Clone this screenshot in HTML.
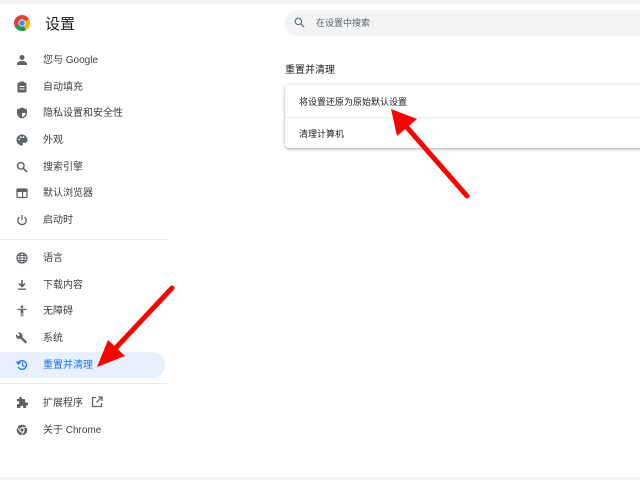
<!DOCTYPE html>
<html><head><meta charset="utf-8"><style>
body{margin:0;width:640px;height:480px;background:#fff;position:relative;overflow:hidden;font-family:"Liberation Sans","Noto Sans CJK SC",sans-serif;color:#3c4043}
.top{position:absolute;left:0;top:0;width:640px;height:4px;background:#f1f3f4}
.bot{position:absolute;left:0;top:477px;width:640px;height:3px;background:#f1f3f4}
.item{position:absolute;left:0;width:165px;height:26px;font-size:10px;line-height:26px}
.item span{position:absolute;left:43px;top:1px}
.item svg{position:absolute;left:16px;top:7px;width:12px;height:12px}
.sel{background:#e8f0fe;border-radius:0 13px 13px 0;color:#1a73e8}
.sep{position:absolute;left:0;width:167px;height:1px;background:#e8eaed}
</style></head><body>
<div class="top"></div><div class="bot"></div>
<svg style="position:absolute;left:14px;top:15px" width="16" height="16" viewBox="0 0 16 16"><circle cx="8" cy="8" r="8" fill="#db4437"/><path d="M8 8 L1.1 12 A8 8 0 0 0 12 14.9Z" fill="#0f9d58"/><path d="M8 8 L12 14.9 A8 8 0 0 0 14.9 4Z" fill="#f4b400"/><circle cx="8" cy="8" r="3.6" fill="#fff"/><circle cx="8" cy="8" r="2.8" fill="#4285f4"/></svg>
<div style="position:absolute;left:45px;top:13px;font-size:15px;color:#202124">设置</div>
<div class="item" style="top:47px"><svg viewBox="0 0 12 12"><circle cx="6" cy="3.5" r="2.5" fill="#5f6368"/><path d="M1 11v-1.5c0-1.5 3-2.5 5-2.5s5 1 5 2.5V11z" fill="#5f6368"/></svg><span>您与 Google</span></div>
<div class="item" style="top:74px"><svg viewBox="0 0 12 12"><rect x="1.5" y="1.5" width="9" height="10" rx="1" fill="#5f6368"/><rect x="4" y="0.5" width="4" height="2" fill="#5f6368"/><rect x="3.5" y="5" width="5" height="1" fill="#fff"/><rect x="3.5" y="7.5" width="5" height="1" fill="#fff"/></svg><span>自动填充</span></div>
<div class="item" style="top:100px"><svg viewBox="0 0 12 12"><path d="M6 0.5 L11 2.5 V6 C11 9 8.5 11 6 11.5 C3.5 11 1 9 1 6 V2.5Z" fill="#5f6368"/><path d="M6 2 V10 C8 9.5 9.6 8 9.6 6H6Z" fill="#fff"/></svg><span>隐私设置和安全性</span></div>
<div class="item" style="top:127px"><svg viewBox="0 0 12 12"><path d="M6 0.5a5.5 5.5 0 0 0 0 11c1 0 1.2-.8.8-1.4-.4-.6 0-1.3.8-1.3H9a2.5 2.5 0 0 0 2.5-2.5C11.5 3 9 .5 6 .5z" fill="#5f6368"/><circle cx="3.2" cy="5.5" r=".9" fill="#fff"/><circle cx="4.8" cy="3.2" r=".9" fill="#fff"/><circle cx="7.5" cy="3.2" r=".9" fill="#fff"/></svg><span>外观</span></div>
<div class="item" style="top:154px"><svg viewBox="0 0 12 12"><circle cx="4.8" cy="4.8" r="3.3" fill="none" stroke="#5f6368" stroke-width="1.4"/><path d="M7.3 7.3L11 11" stroke="#5f6368" stroke-width="1.6"/></svg><span>搜索引擎</span></div>
<div class="item" style="top:180px"><svg viewBox="0 0 12 12"><rect x="1" y="2" width="10" height="8.5" rx="1" fill="none" stroke="#5f6368" stroke-width="1.3"/><rect x="1" y="2" width="10" height="3" fill="#5f6368"/><rect x="6" y="5" width="1.2" height="5" fill="#5f6368"/></svg><span>默认浏览器</span></div>
<div class="item" style="top:207px"><svg viewBox="0 0 12 12"><path d="M3.5 3A4.2 4.2 0 1 0 8.5 3" fill="none" stroke="#5f6368" stroke-width="1.3"/><path d="M6 1v5" stroke="#5f6368" stroke-width="1.3"/></svg><span>启动时</span></div>
<div class="sep" style="top:239px"></div>
<div class="item" style="top:245px"><svg viewBox="0 0 12 12"><circle cx="6" cy="6" r="5" fill="none" stroke="#5f6368" stroke-width="1.2"/><ellipse cx="6" cy="6" rx="2.2" ry="5" fill="none" stroke="#5f6368" stroke-width="1"/><path d="M1 6h10M1.8 3.5h8.4M1.8 8.5h8.4" stroke="#5f6368" stroke-width=".9"/></svg><span>语言</span></div>
<div class="item" style="top:272px"><svg viewBox="0 0 12 12"><path d="M6 1v6M3 4.5l3 3 3-3" fill="none" stroke="#5f6368" stroke-width="1.6"/><rect x="2" y="9.5" width="8" height="1.4" fill="#5f6368"/></svg><span>下载内容</span></div>
<div class="item" style="top:298px"><svg viewBox="0 0 12 12"><circle cx="6" cy="1.7" r="1.3" fill="#5f6368"/><path d="M1.5 3.8h9v1.2H7.3v6.5H6.4V8H5.6v3.5H4.7V5H1.5z" fill="#5f6368"/></svg><span>无障碍</span></div>
<div class="item" style="top:325px"><svg viewBox="0 0 12 12"><path d="M10.8 9.6L6.3 5.1c.5-1.2.2-2.6-.8-3.6C4.5.5 3 .3 1.8.8l2.1 2.1-1.5 1.5L.3 2.3C-.3 3.5 0 5 1 6c1 1 2.4 1.3 3.6.8l4.5 4.5c.2.2.5.2.7 0l1-1c.2-.2.2-.5 0-.7z" fill="#5f6368"/></svg><span>系统</span></div>
<div class="item sel" style="top:352px"><svg viewBox="0 0 12 12"><path d="M2.3 4A4.3 4.3 0 1 1 2.3 8" fill="none" stroke="#1a73e8" stroke-width="1.3"/><path d="M0.5 2.5L2.3 5 4.5 3.3" fill="none" stroke="#1a73e8" stroke-width="1.2"/><path d="M6.5 3.5v3l2 1.2" fill="none" stroke="#1a73e8" stroke-width="1.1"/></svg><span>重置并清理</span></div>
<div class="sep" style="top:383px"></div>
<div class="item" style="top:390px"><svg viewBox="0 0 12 12"><path d="M10 5.5h-.8V3c0-.6-.4-1-1-1H5.8v-.8a1.3 1.3 0 0 0-2.6 0V2H1v2.3h.7a1.5 1.5 0 0 1 0 3H1V10c0 .6.4 1 1 1h2.3v-.8a1.5 1.5 0 0 1 3 0V11H9.2c.6 0 1-.4 1-1V8.2h.8a1.3 1.3 0 0 0 0-2.7z" fill="#5f6368"/></svg><span>扩展程序 <svg style="position:static;vertical-align:-2px;margin-left:5px" width="11" height="11" viewBox="0 0 12 12"><path d="M5 1.5H1.5v9h9V7" fill="none" stroke="#5f6368" stroke-width="1.3"/><path d="M7 1h4v4M11 1L5.5 6.5" fill="none" stroke="#5f6368" stroke-width="1.3"/></svg></span></div>
<div class="item" style="top:417px"><svg viewBox="0 0 12 12"><circle cx="6" cy="6" r="5.3" fill="#5f6368"/><circle cx="6" cy="6" r="2.6" fill="#fff"/><circle cx="6" cy="6" r="1.6" fill="#5f6368"/><path d="M6 3.4h5M3.8 7.3L1.4 3.2M8.2 7.3L5.7 11.3" stroke="#fff" stroke-width=".7"/></svg><span>关于 Chrome</span></div>

<div style="position:absolute;left:285px;top:10px;width:370px;height:26px;background:#f1f3f4;border-radius:13px"></div>
<svg style="position:absolute;left:294px;top:17px" width="11" height="11" viewBox="0 0 12 12"><circle cx="4.8" cy="4.8" r="3.5" fill="none" stroke="#5f6368" stroke-width="1.2"/><path d="M7.3 7.3L11 11" stroke="#5f6368" stroke-width="1.3"/></svg>
<div style="position:absolute;left:316px;top:16px;font-size:9px;color:#5f6368">在设置中搜索</div>
<div style="position:absolute;left:285px;top:61px;font-size:10px;color:#202124">重置并清理</div>
<div style="position:absolute;left:285px;top:85px;width:370px;height:63px;background:#fff;border-radius:4px;box-shadow:0 1px 2px rgba(60,64,67,.3),0 1px 3px 1px rgba(60,64,67,.15)"></div>
<div style="position:absolute;left:285px;top:117px;width:355px;height:1px;background:#eceef0"></div>
<div style="position:absolute;left:299px;top:95px;font-size:9px;color:#202124">将设置还原为原始默认设置</div>
<div style="position:absolute;left:299px;top:127px;font-size:9px;color:#202124">清理计算机</div>

<svg style="position:absolute;left:0;top:0" width="640" height="480">
<line x1="467" y1="196" x2="404" y2="124" stroke="#f00" stroke-width="5" stroke-linecap="round"/>
<polygon points="391,109 417,119 397,136" fill="#f00"/>
<line x1="172" y1="288" x2="112" y2="352" stroke="#f00" stroke-width="5" stroke-linecap="round"/>
<polygon points="97,367 108,340 125,356" fill="#f00"/>
</svg>
</body></html>
